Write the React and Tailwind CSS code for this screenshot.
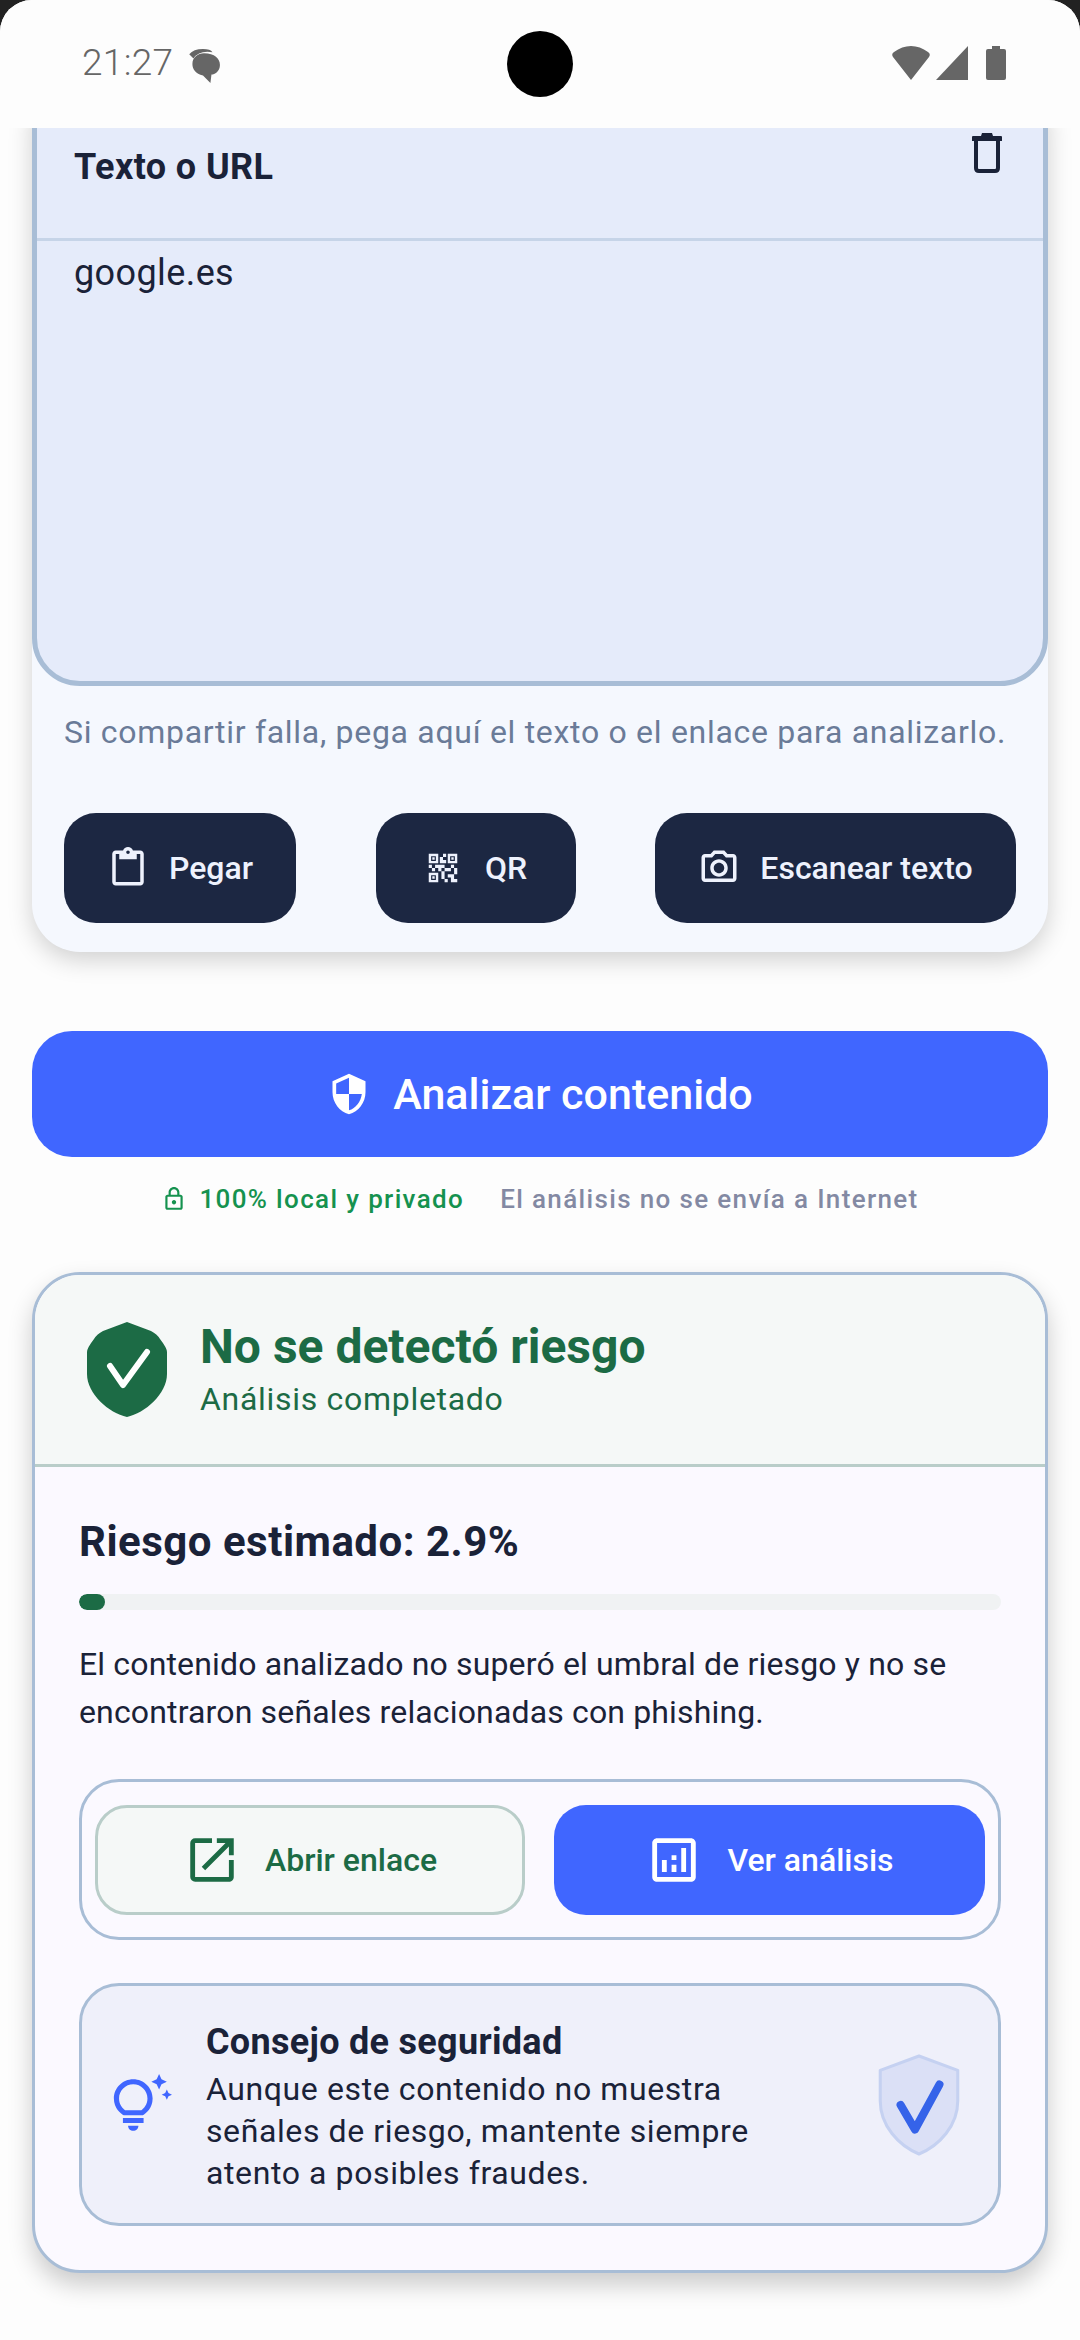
import {
  MdOpenInNew,
  MdOutlineAnalytics,
  MdOutlineContentPaste,
  MdOutlineLock,
  MdOutlinePhotoCamera,
  MdOutlineTipsAndUpdates,
  MdQrCode2,
  MdSecurity,
} from 'react-icons/md';

const font = { fontFamily: 'Roboto, sans-serif' };

function ScanButton({ icon: Icon, iconSize = 40, label, gap = 'gap-[20px]', className = '' }) {
  return (
    <button className={`flex h-[110px] items-center justify-center rounded-[32px] bg-[#1c2742] text-[32px] font-medium text-[#eef2fd] ${gap} ${className}`}>
      <Icon size={iconSize} />
      <span>{label}</span>
    </button>
  );
}

function GreenShield() {
  return (
    <svg width="80" height="95" viewBox="0 0 80 95">
      <path d="M40 0 L64 9 Q70 12 73 17 Q80 26 80 30 L80 52 C80 72 58 91 40 95 C22 91 0 72 0 52 L0 30 Q0 26 7 17 Q10 12 16 9 Z" fill="#1c6b45" />
      <path d="M23 44 L36 63 L60 30" fill="none" stroke="#fff" strokeWidth="6" strokeLinecap="round" strokeLinejoin="round" />
    </svg>
  );
}

function TipShield() {
  return (
    <svg width="86" height="102" viewBox="0 0 84 100">
      <path d="M42 2 L80 16 L80 46 C80 70 62 90 42 98 C22 90 4 70 4 46 L4 16 Z" fill="#dbe0f6" stroke="#c5d1f1" strokeWidth="3" strokeLinejoin="round" />
      <path d="M24 50 L38 74 L62 30" fill="none" stroke="#3563e9" strokeWidth="8" strokeLinecap="round" strokeLinejoin="round" />
    </svg>
  );
}

function TrashIcon() {
  return (
    <svg width="30" height="40" viewBox="0 0 30 40" className="text-[#1a2238]">
      <path d="M10 0 H20 L21 3 H29 Q30 3 30 4 V8 H0 V4 Q0 3 1 3 H9 Z" fill="currentColor" />
      <path d="M4 8 V35 Q4 38 7 38 H23 Q26 38 26 35 V8" fill="none" stroke="currentColor" strokeWidth="4" />
    </svg>
  );
}

function StatusIcons() {
  return (
    <div className="flex items-center gap-[6px]">
      <svg width="38" height="34" viewBox="0 0 38 34" fill="#666">
        <path d="M19 34 L1 11 Q-1 8 2 6 Q10 0 19 0 Q28 0 36 6 Q39 8 37 11 Z" />
      </svg>
      <svg width="32" height="34" viewBox="0 0 32 34" fill="#666">
        <path d="M32 0 V34 H0 Z" />
      </svg>
      <svg width="20" height="34" viewBox="0 0 20 34" fill="#666" className="ml-[12px]">
        <path d="M6 0 H14 V3 H18 Q20 3 20 5 V32 Q20 34 18 34 H2 Q0 34 0 32 V5 Q0 3 2 3 H6 Z" />
      </svg>
    </div>
  );
}

export default function App() {
  return (
    <div style={font} className="flex h-[2340px] w-[1080px] flex-col overflow-hidden bg-[#222]">
      <div className="flex h-full flex-col overflow-hidden rounded-t-[32px] bg-[#fdfdfd]">
        <header className="relative z-10 flex h-[128px] shrink-0 items-center justify-between bg-[#fdfdfd] pb-[2px] pl-[82px] pr-[74px] text-[#666]">
          <div className="flex items-center gap-[12px]">
            <span className="text-[37px] font-light tracking-[0.3px]">21:27</span>
            <svg width="36" height="36" viewBox="0 0 34 34" className="mt-[6px]">
              <path d="M4 6 Q8 1 17 1 Q24 1 26 4 Q13 2 8 10 Z" fill="#666" />
              <path d="M18 5 C28 5 33 10 33 16 C33 22 28 25 25 25 L24 33 L17 26 C10 24 7 20 7 15 C7 9 12 5 18 5 Z" fill="#666" />
            </svg>
          </div>
          <div className="absolute left-[507px] top-[31px] h-[66px] w-[66px] rounded-full bg-black" />
          <StatusIcons />
        </header>

        <main className="flex flex-1 flex-col overflow-hidden px-[32px]">
          <section className="-mt-[50px] shrink-0 rounded-[48px] bg-[#f5f8fe] pb-[29px] shadow-[0_8px_24px_rgba(0,0,0,0.18)]">
            <div className="h-[608px] rounded-[48px] border-[5px] border-[#a8bdd6] bg-[#e5ebfa]">
              <div className="flex h-[158px] items-start justify-between border-b-[3px] border-[#c6d4e8] pl-[37px] pr-[41px] pt-[60px]">
                <span className="text-[36px] font-bold leading-[48px] tracking-[0.4px] text-[#1a2238]">Texto o URL</span>
                <div className="mt-[-10px]"><TrashIcon /></div>
              </div>
              <p className="px-[37px] pt-[10px] text-[36px] leading-[44px] tracking-[0.4px] text-[#1a2238]">google.es</p>
            </div>
            <p className="px-[32px] pt-[25px] text-[32px] leading-[42px] tracking-[0.7px] text-[#6a7b98]">
              Si compartir falla, pega aquí el texto o el enlace para analizarlo.
            </p>
            <div className="flex justify-between px-[32px] pt-[60px]">
              <ScanButton icon={MdOutlineContentPaste} iconSize={42} label="Pegar" className="w-[232px]" />
              <ScanButton icon={MdQrCode2} iconSize={38} label="QR" gap="gap-[23px]" className="w-[200px]" />
              <ScanButton icon={MdOutlinePhotoCamera} iconSize={42} label="Escanear texto" className="w-[361px]" />
            </div>
          </section>

          <button className="mt-[79px] flex h-[126px] shrink-0 items-center justify-center gap-[22px] rounded-[40px] bg-[#4066ff] text-[43px] font-medium text-white">
            <MdSecurity size={44} />
            <span>Analizar contenido</span>
          </button>

          <div className="mt-[26px] flex items-center justify-center gap-[36px] text-[26px] font-medium leading-[32px] tracking-[1.35px]">
            <span className="flex items-center gap-[12px] text-[#15924f]">
              <MdOutlineLock size={26} />
              100% local y privado
            </span>
            <span className="text-[#8389a3]">El análisis no se envía a Internet</span>
          </div>

          <section className="mt-[57px] shrink-0 overflow-hidden rounded-[48px] border-[3px] border-[#a8bdd6] bg-[#fbf9ff] shadow-[0_12px_24px_rgba(0,0,0,0.2)]">
            <div className="flex h-[192px] items-center gap-[33px] border-b-[3px] border-[#b9cdc9] bg-[#f5f8f7] pl-[52px]">
              <GreenShield />
              <div>
                <h2 className="text-[48px] font-bold leading-[54px] text-[#1c6b45]">No se detectó riesgo</h2>
                <p className="mt-[5px] text-[32px] leading-[40px] tracking-[0.7px] text-[#1c6b45]">Análisis completado</p>
              </div>
            </div>
            <div className="px-[44px] pb-[44px] pt-[50px]">
              <h3 className="text-[42px] font-bold leading-[50px] tracking-[0.5px] text-[#1a2238]">Riesgo estimado: 2.9%</h3>
              <div className="mt-[27px] h-[16px] w-full overflow-hidden rounded-full bg-[#f0f2f3]">
                <div className="h-full w-[26px] rounded-full bg-[#1c6b45]" />
              </div>
              <p className="mt-[30px] text-[32px] leading-[48px] tracking-[0.15px] text-[#1a2238]">
                El contenido analizado no superó el umbral de riesgo y no se encontraron señales relacionadas con phishing.
              </p>
              <div className="mt-[43px] flex h-[161px] items-center justify-between rounded-[40px] border-[3px] border-[#a8bdd6] px-[13px]">
                <button className="flex h-[110px] w-[430px] items-center justify-center gap-[24px] rounded-[32px] border-[3px] border-[#b9cdc9] bg-[#f5f8f7] text-[32px] font-medium text-[#1c6b45]">
                  <MdOpenInNew size={58} />
                  Abrir enlace
                </button>
                <button className="flex h-[110px] w-[431px] items-center justify-center gap-[24px] rounded-[32px] bg-[#4066ff] text-[32px] font-medium text-white">
                  <MdOutlineAnalytics size={58} />
                  Ver análisis
                </button>
              </div>
              <div className="mt-[43px] flex h-[243px] items-center rounded-[40px] border-[3px] border-[#a8bdd6] bg-[#eff0fa] pl-[28px] pr-[36px]">
                <MdOutlineTipsAndUpdates size={62} className="shrink-0 text-[#4066ff]" />
                <div className="ml-[34px] flex-1 pt-[4px]">
                  <h4 className="text-[36px] font-bold leading-[44px] tracking-[0.3px] text-[#1a2238]">Consejo de seguridad</h4>
                  <p className="mt-[4px] text-[32px] leading-[42px] tracking-[0.6px] text-[#1a2238]">
                    Aunque este contenido no muestra
                    <br />
                    señales de riesgo, mantente siempre
                    <br />
                    atento a posibles fraudes.
                  </p>
                </div>
                <TipShield />
              </div>
            </div>
          </section>
        </main>
      </div>
    </div>
  );
}
